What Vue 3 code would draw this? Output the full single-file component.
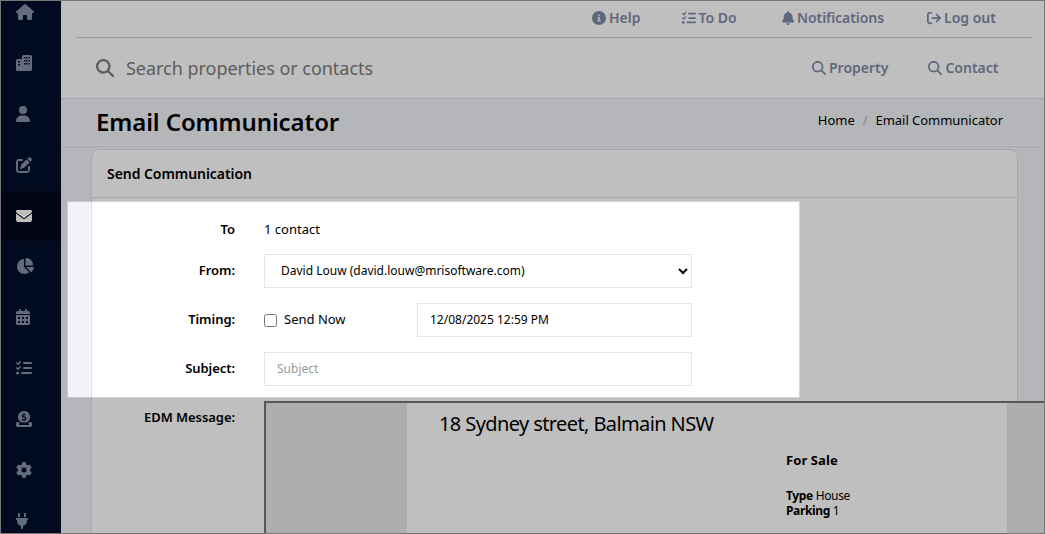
<!-- src/App.vue -->
<template>
  <div class="app">
    <nav class="sidebar">
      <a v-for="item in menu" :key="item.name" class="menu-item" :class="{ active: item.name === current }">
        <svg class="menu-icon" :viewBox="`0 0 ${item.w} 512`" :width="item.w / 32" height="16">
          <path :d="icons[item.name]" fill-rule="evenodd" />
        </svg>
      </a>
    </nav>

    <main class="main">
      <header class="topbar">
        <div class="links">
          <a v-for="link in links" :key="link.label" :class="link.icon">
            <svg :viewBox="`0 0 ${link.w} 512`" :width="link.w * 14 / 512" height="14">
              <path :d="icons[link.icon]" />
            </svg>
            <span>{{ link.label }}</span>
          </a>
        </div>
        <div class="search">
          <svg class="search-icon" viewBox="0 0 512 512" width="18" height="18"><path :d="icons.search" /></svg>
          <span class="search-text">Search properties or contacts</span>
          <a class="property">
            <svg viewBox="0 0 512 512" width="14" height="14"><path :d="icons.search" /></svg>
            <span>Property</span>
          </a>
          <a class="contact">
            <svg viewBox="0 0 512 512" width="14" height="14"><path :d="icons.search" /></svg>
            <span>Contact</span>
          </a>
        </div>
      </header>

      <div class="page-title">
        <h1>Email Communicator</h1>
        <div class="crumbs"><span>Home</span><i>/</i><span>Email Communicator</span></div>
      </div>

      <section class="card">
        <h2>Send Communication</h2>
        <div class="row row-to">
          <label>To</label>
          <span>1 contact</span>
        </div>
        <div class="row">
          <label>From:</label>
          <select v-model="from" class="field">
            <option>David Louw (david.louw@mrisoftware.com)</option>
          </select>
        </div>
        <div class="row">
          <label>Timing:</label>
          <div class="send-now"><input v-model="sendNow" type="checkbox" /><span>Send Now</span></div>
          <input v-model="sendAt" class="field date" type="text" />
        </div>
        <div class="row">
          <label>Subject:</label>
          <input v-model="subject" class="field" type="text" placeholder="Subject" />
        </div>
        <div class="row row-message">
          <label>EDM Message:</label>
          <div class="editor">
            <div class="mail">
              <p class="address">18 Sydney street, Balmain NSW</p>
              <div class="details">
                <h3>For Sale</h3>
                <p><b>Type</b> House</p>
                <p><b>Parking</b> 1</p>
              </div>
            </div>
          </div>
        </div>
      </section>
    </main>

    <!-- dims everything outside the highlighted fields -->
    <div class="spotlight"></div>
    <div class="frame"></div>
  </div>
</template>

<script setup>
import { ref } from 'vue'

const current = ref('envelope')
const from = ref('David Louw (david.louw@mrisoftware.com)')
const sendNow = ref(false)
const sendAt = ref('12/08/2025 12:59 PM')
const subject = ref('')

const menu = [
  { name: 'home', w: 576 },
  { name: 'city', w: 512 },
  { name: 'user', w: 448 },
  { name: 'edit', w: 512 },
  { name: 'envelope', w: 512 },
  { name: 'pie', w: 576 },
  { name: 'calendar', w: 448 },
  { name: 'tasks', w: 512 },
  { name: 'coin', w: 512 },
  { name: 'gear', w: 512 },
  { name: 'plug', w: 384 }
]

const links = [
  { icon: 'info', w: 512, label: 'Help' },
  { icon: 'tasks', w: 512, label: 'To Do' },
  { icon: 'bell', w: 448, label: 'Notifications' },
  { icon: 'logout', w: 512, label: 'Log out' }
]

const icons = {
  home: 'M575.8 255.5c0 18-15 32.1-32 32.1l-32 0 .7 160.2c0 2.7-.2 5.4-.5 8.1l0 16.2c0 22.1-17.9 40-40 40l-16 0c-1.1 0-2.2 0-3.3-.1c-1.4 .1-2.8 .1-4.2 .1L416 512l-24 0c-22.1 0-40-17.9-40-40l0-24 0-64c0-17.7-14.3-32-32-32l-64 0c-17.7 0-32 14.3-32 32l0 64 0 24c0 22.1-17.9 40-40 40l-24 0-31.9 0c-1.5 0-3-.1-4.5-.2c-1.2 .1-2.4 .2-3.6 .2l-16 0c-22.1 0-40-17.9-40-40l0-112c0-.9 0-1.9 .1-2.8l0-69.7-32 0c-18 0-32-14-32-32.1c0-9 3-17 10-24L266.4 8c7-7 15-8 22-8s15 2 21 7L564.8 231.5c8 7 12 15 11 24z',
  city: 'M240 0H464a48 48 0 0 1 48 48V464a48 48 0 0 1-48 48H48a48 48 0 0 1-48-48V176a48 48 0 0 1 48-48H192V48a48 48 0 0 1 48-48zM256 64v48h48V64zM320 64v48h48V64zM400 64v48h48V64zM256 160v48h48v-48zM320 160v48h48v-48zM400 160v48h48v-48zM256 256v48h48v-48zM320 256v48h48v-48zM400 256v48h48v-48zM64 192v48h64v-48zM64 288v48h64v-48z',
  user: 'M224 256A128 128 0 1 0 224 0a128 128 0 1 0 0 256zm-45.7 48C79.8 304 0 383.8 0 482.3C0 498.7 13.3 512 29.7 512l388.6 0c16.4 0 29.7-13.3 29.7-29.7C448 383.8 368.2 304 269.7 304l-91.4 0z',
  edit: 'M471.6 21.7c-21.9-21.9-57.3-21.9-79.2 0L362.3 51.7l97.9 97.9 30.1-30.1c21.9-21.9 21.9-57.3 0-79.2L471.6 21.7zm-299.2 220c-6.1 6.1-10.8 13.6-13.5 21.9l-29.6 88.8c-2.9 8.6-.6 18.1 5.8 24.6s15.9 8.7 24.6 5.8l88.8-29.6c8.2-2.7 15.7-7.4 21.9-13.5L437.7 172.3 339.7 74.3 172.4 241.7zM96 64C43 64 0 107 0 160L0 416c0 53 43 96 96 96l256 0c53 0 96-43 96-96l0-96c0-17.7-14.3-32-32-32s-32 14.3-32 32l0 96c0 17.7-14.3 32-32 32L96 448c-17.7 0-32-14.3-32-32l0-256c0-17.7 14.3-32 32-32l96 0c17.7 0 32-14.3 32-32s-14.3-32-32-32L96 64z',
  envelope: 'M48 64C21.5 64 0 85.5 0 112c0 15.1 7.1 29.3 19.2 38.4L236.8 313.6c11.4 8.5 27 8.5 38.4 0L492.8 150.4c12.1-9.1 19.2-23.3 19.2-38.4c0-26.5-21.5-48-48-48L48 64zM0 176L0 384c0 35.3 28.7 64 64 64l384 0c35.3 0 64-28.7 64-64l0-208L294.4 339.2c-22.8 17.1-54 17.1-76.8 0L0 176z',
  pie: 'M304 240l0-223.4c0-9 7-16.6 16-16.6C443.7 0 544 100.3 544 224c0 9-7.6 16-16.6 16L304 240zM32 272C32 150.7 122.1 50.3 239 34.3c9.2-1.3 17 6.1 17 15.4L256 288 412.5 444.5c6.7 6.7 6.2 17.7-1.5 23.1C371.8 495.6 323.8 512 272 512C139.5 512 32 404.6 32 272zm526.4 16c9.3 0 16.6 7.8 15.4 17c-7.7 55.9-34.6 105.6-73.9 142.3c-6 5.6-15.4 5.2-21.2-.7L320 288l238.4 0z',
  calendar: 'M96 32a32 32 0 0 1 64 0V64H288V32a32 32 0 0 1 64 0V64H400a48 48 0 0 1 48 48V160H0V112A48 48 0 0 1 48 64H96zM0 192H448V464a48 48 0 0 1-48 48H48a48 48 0 0 1-48-48zM64 256v64h64v-64zM192 256v64h64v-64zM320 256v64h64v-64zM64 384v64h64v-64zM192 384v64h64v-64zM320 384v64h64v-64z',
  tasks: 'M152.1 38.2c9.9 8.9 10.7 24 1.8 33.9l-72 80c-4.4 4.9-10.6 7.8-17.2 7.9s-12.9-2.4-17.6-7L7 113C-2.3 103.6-2.3 88.4 7 79s24.6-9.4 33.9 0l22.1 22.1 55.1-61.2c8.9-9.9 24-10.7 33.9-1.8zm0 160c9.9 8.9 10.7 24 1.8 33.9l-72 80c-4.4 4.9-10.6 7.8-17.2 7.9s-12.9-2.4-17.6-7L7 273c-9.4-9.4-9.4-24.6 0-33.9s24.6-9.4 33.9 0l22.1 22.1 55.1-61.2c8.9-9.9 24-10.7 33.9-1.8zM224 96c0-17.7 14.3-32 32-32l224 0c17.7 0 32 14.3 32 32s-14.3 32-32 32l-224 0c-17.7 0-32-14.3-32-32zm0 160c0-17.7 14.3-32 32-32l224 0c17.7 0 32 14.3 32 32s-14.3 32-32 32l-224 0c-17.7 0-32-14.3-32-32zM160 416c0-17.7 14.3-32 32-32l288 0c17.7 0 32 14.3 32 32s-14.3 32-32 32l-288 0c-17.7 0-32-14.3-32-32zM48 368a48 48 0 1 1 0 96 48 48 0 1 1 0-96z',
  coin: 'M256 0a192 192 0 0 1 157 302c-30 44-60 66-157 66s-127-22-157-66A192 192 0 0 1 256 0zM236 72v28c-36 6-56 28-56 58 0 38 32 50 62 59 30 8 46 14 46 27 0 12-13 18-32 18-18 0-37-7-56-14l-14 38c16 7 32 12 50 15v27h40v-28c38-6 58-28 58-60 0-40-34-52-66-61-28-8-42-13-42-24 0-10 10-16 30-16 16 0 32 4 46 9l13-38c-12-4-25-8-39-10V72zM48 352H88l42 48H96v48H416V400h-34l42-48h40a48 48 0 0 1 48 48v64a48 48 0 0 1-48 48H48a48 48 0 0 1-48-48v-64a48 48 0 0 1 48-48z',
  gear: 'M495.9 166.6c3.2 8.7 .5 18.4-6.4 24.6l-43.3 39.4c1.1 8.3 1.7 16.8 1.7 25.4s-.6 17.1-1.7 25.4l43.3 39.4c6.9 6.2 9.6 15.9 6.4 24.6c-4.4 11.9-9.7 23.3-15.8 34.3l-4.7 8.1c-6.6 11-14 21.4-22.1 31.2c-5.9 7.2-15.7 9.6-24.5 6.8l-55.7-17.7c-13.4 10.3-28.2 18.9-44 25.4l-12.5 57.1c-2 9.1-9 16.3-18.2 17.8c-13.8 2.3-28 3.5-42.5 3.5s-28.7-1.2-42.5-3.5c-9.2-1.5-16.2-8.7-18.2-17.8l-12.5-57.1c-15.8-6.5-30.6-15.1-44-25.4L83.1 425.9c-8.8 2.8-18.6 .3-24.5-6.8c-8.1-9.8-15.5-20.2-22.1-31.2l-4.7-8.1c-6.1-11-11.4-22.4-15.8-34.3c-3.2-8.7-.5-18.4 6.4-24.6l43.3-39.4C64.6 273.1 64 264.6 64 256s.6-17.1 1.7-25.4L22.4 191.2c-6.9-6.2-9.6-15.9-6.4-24.6c4.4-11.9 9.7-23.3 15.8-34.3l4.7-8.1c6.6-11 14-21.4 22.1-31.2c5.9-7.2 15.7-9.6 24.5-6.8l55.7 17.7c13.4-10.3 28.2-18.9 44-25.4l12.5-57.1c2-9.1 9-16.3 18.2-17.8C227.3 1.2 241.5 0 256 0s28.7 1.2 42.5 3.5c9.2 1.5 16.2 8.7 18.2 17.8l12.5 57.1c15.8 6.5 30.6 15.1 44 25.4l55.7-17.7c8.8-2.8 18.6-.3 24.5 6.8c8.1 9.8 15.5 20.2 22.1 31.2l4.7 8.1c6.1 11 11.4 22.4 15.8 34.3zM256 336a80 80 0 1 0 0-160 80 80 0 1 0 0 160z',
  plug: 'M96 0C78.3 0 64 14.3 64 32l0 96 64 0 0-96c0-17.7-14.3-32-32-32zM288 0c-17.7 0-32 14.3-32 32l0 96 64 0 0-96c0-17.7-14.3-32-32-32zM32 160c-17.7 0-32 14.3-32 32s14.3 32 32 32l0 32c0 77.4 55 142 128 156.8l0 67.2c0 17.7 14.3 32 32 32s32-14.3 32-32l0-67.2C297 398 352 333.4 352 256l0-32c17.7 0 32-14.3 32-32s-14.3-32-32-32L32 160z',
  info: 'M256 512A256 256 0 1 0 256 0a256 256 0 1 0 0 512zM216 336l24 0 0-64-24 0c-13.3 0-24-10.7-24-24s10.7-24 24-24l48 0c13.3 0 24 10.7 24 24l0 88 8 0c13.3 0 24 10.7 24 24s-10.7 24-24 24l-80 0c-13.3 0-24-10.7-24-24s10.7-24 24-24zm40-208a32 32 0 1 1 0 64 32 32 0 1 1 0-64z',
  bell: 'M224 0c-17.7 0-32 14.3-32 32l0 19.2C119 66 64 130.6 64 208l0 18.8c0 47-17.3 92.4-48.5 127.6l-7.4 8.3c-8.4 9.4-10.4 22.9-5.3 34.4S19.4 416 32 416l384 0c12.6 0 24-7.4 29.2-18.9s3.1-25-5.3-34.4l-7.4-8.3C401.3 319.2 384 273.9 384 226.8l0-18.8c0-77.4-55-142-128-156.8L256 32c0-17.7-14.3-32-32-32zm45.3 493.3c12-12 18.7-28.3 18.7-45.3l-64 0-64 0c0 17 6.7 33.3 18.7 45.3s28.3 18.7 45.3 18.7s33.3-6.7 45.3-18.7z',
  search: 'M416 208c0 45.9-14.9 88.3-40 122.7L502.6 457.4c12.5 12.5 12.5 32.8 0 45.3s-32.8 12.5-45.3 0L330.7 376c-34.4 25.2-76.8 40-122.7 40C93.1 416 0 322.9 0 208S93.1 0 208 0S416 93.1 416 208zM208 352a144 144 0 1 0 0-288 144 144 0 1 0 0 288z',
  logout: 'M502.6 278.6c12.5-12.5 12.5-32.8 0-45.3l-128-128c-12.5-12.5-32.8-12.5-45.3 0s-12.5 32.8 0 45.3L402.7 224 192 224c-17.7 0-32 14.3-32 32s14.3 32 32 32l210.7 0-73.4 73.4c-12.5 12.5-12.5 32.8 0 45.3s32.8 12.5 45.3 0l128-128zM160 96c17.7 0 32-14.3 32-32s-14.3-32-32-32L96 32C43 32 0 75 0 128L0 384c0 53 43 96 96 96l64 0c17.7 0 32-14.3 32-32s-14.3-32-32-32l-64 0c-17.7 0-32-14.3-32-32l0-256c0-17.7 14.3-32 32-32l64 0z'
}
</script>

<style>
body {
  overflow: hidden;
}
</style>

<style scoped>
.app {
  position: relative;
  display: flex;
  width: 1045px; height: 534px;
  overflow: hidden;
  background: #f1f3f8;
  font-family: "Noto Sans", "Open Sans", sans-serif;
  font-size: 13px;
  color: #000;
}
.app * { box-sizing: border-box; }
h1, h2, h3, p { margin: 0; }
svg { fill: currentColor; flex: none; display: block; }

.sidebar {
  flex: none;
  width: 61px;
  margin-top: -13px;
  height: 561px;
  background: #000f2b;
  color: #848fa8;
}
.menu-item {
  display: flex; align-items: center;
  height: 50px; margin-bottom: 1px;
  padding-left: 16px;
}
.menu-item.active { margin-bottom: 0; background: #00061a; color: #fff; }

.main { flex: none; width: 984px; }
.topbar {
  height: 99px;
  background: #fff;
  border-bottom: 1px solid #dfe0e6;
  color: #7f8aa8;
  font-size: 14px; font-weight: 600;
}
.links {
  display: flex; align-items: center;
  height: 38px;
  margin: 0 12px 0 15px;
  padding: 0 0 1px 516px;
  border-bottom: 1px solid #d0d1d2;
}
.links a, .search a { display: flex; align-items: center; gap: 3px; flex: none; white-space: nowrap; }
.links span { margin-top: -1px; }
.links .tasks { margin-left: 41px; }
.links .bell { margin-left: 45px; }
.links .bell span { letter-spacing: -.06px; }
.links .logout { margin-left: 43px; }
.search { display: flex; align-items: center; height: 60px; padding-left: 35px; }
.search-icon { color: #7d7d7d; }
.search-text {
  width: 698px; padding-left: 12px;
  font-size: 18px; font-weight: 400; color: #7c7c7c;
  letter-spacing: -.03px;
}
.search a { padding-bottom: 1px; }
.search a span { margin-top: -1px; }
.search .contact { margin-left: 40px; }

.page-title {
  display: flex; align-items: center; justify-content: space-between;
  height: 48px;
  padding: 0 42px 2px 35px;
  border-bottom: 1px solid #dfe0e6;
  box-shadow: inset 0 -1px #fff;
}
h1 { font-size: 24px; font-weight: 600; letter-spacing: -.1px; }
.crumbs { padding-bottom: 4px; letter-spacing: -.03px; }
.crumbs i { margin: 0 8px; font-style: normal; color: #b0b0b0; }

.card {
  width: 927px; height: 420px;
  margin: 2px 0 0 30px;
  background: #fff;
  border: 1px solid #e0e2e8;
  border-radius: 8px;
}
h2 {
  height: 48px;
  padding-left: 15px;
  line-height: 48px;
  font-size: 14px; font-weight: 600;
  letter-spacing: -.06px;
  border-bottom: 1px solid #e0e1e5;
}
.row { display: flex; align-items: center; height: 34px; margin-bottom: 15px; }
.row-to { height: 16px; margin: 23px 0 17px; }
.row label {
  flex: none;
  width: 143px; margin-right: 29px;
  padding-bottom: 2px;
  text-align: right;
  font-weight: 600;
  letter-spacing: -.06px;
}
.row-to label { padding-bottom: 0; }
.field {
  width: 428px; height: 34px;
  padding: 0 12px 2px;
  border: 1px solid #e5e5e5; border-radius: 0;
  background: #fff; color: #000;
  font: 12px "Noto Sans", sans-serif;
}
select.field { padding: 0 0 1px 12px; }
.field::placeholder { color: #999; opacity: 1; }
.send-now { display: flex; align-items: center; width: 153px; }
.send-now input { width: 13px; height: 13px; margin: 1px 7px 0 0; }
.send-now span { padding-bottom: 2px; }
.date { width: 275px; }
.row-message { align-items: flex-start; height: 140px; }
.row-message label { padding-top: 7px; }
.editor {
  flex: none;
  width: 800px; height: 140px;
  padding-left: 141px;
  background: #e8e8e8;
  border: 2px solid #767676;
}
.mail {
  width: 600px; height: 140px;
  padding: 7px 32px;
  background: #fff;
}
.address { font-size: 20px; line-height: 28px; letter-spacing: -0.6px; white-space: nowrap; }
.details { padding: 11px 0 0 347px; font-size: 12px; line-height: 15px; letter-spacing: -0.35px; }
.details h3 { margin-bottom: 17px; font-size: 13px; line-height: 22px; letter-spacing: .1px; }

.spotlight {
  position: absolute; left: 67px; top: 201px;
  width: 733px; height: 197px;
  box-shadow: 0 0 0 1100px rgba(0, 0, 0, .25), inset 0 0 0 1px rgba(0, 0, 0, .13), inset 0 0 2px rgba(0, 0, 0, .15);
  pointer-events: none;
}
.frame {
  position: absolute; inset: 0;
  border: 1px solid #777;
  pointer-events: none;
}
</style>
